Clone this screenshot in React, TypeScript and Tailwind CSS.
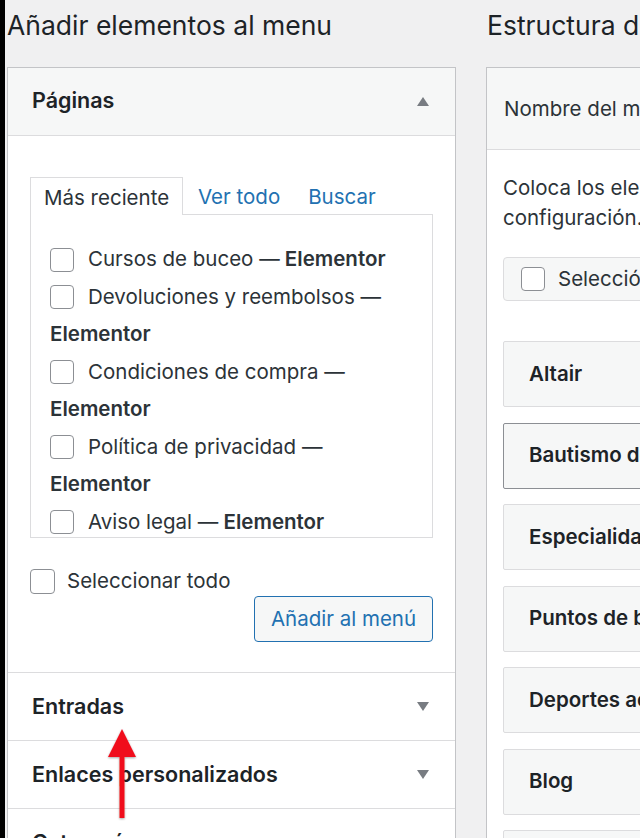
import React from "react";

const Box = () => (
  <span className="inline-block w-[24px] h-[24px] shrink-0 rounded-[4px] border border-[#8c8f94] bg-white" />
);

const TriUp = () => (
  <svg width="12" height="9" viewBox="0 0 12 9" className="shrink-0">
    <path d="M6 0 L12 9 L0 9 Z" fill="#787c82" />
  </svg>
);
const TriDown = () => (
  <svg width="12" height="9" viewBox="0 0 12 9" className="shrink-0">
    <path d="M0 0 L12 0 L6 9 Z" fill="#787c82" />
  </svg>
);

function Item({ text, bold, second }: { text: string; bold?: string; second?: string }) {
  return (
    <>
      <div className="flex items-center h-[37.5px]">
        <Box />
        <span className="ml-[14px] whitespace-nowrap">
          {text}
          {bold ? <b className="font-semibold"> {bold}</b> : null}
        </span>
      </div>
      {second ? (
        <div className="h-[37.5px] flex items-center font-semibold">{second}</div>
      ) : null}
    </>
  );
}

function ClosedSection({ title }: { title: string }) {
  return (
    <div className="h-[68px] border-t border-[#dcdcde] bg-white flex items-center justify-between pl-[24px] pr-[26px]">
      <span className="text-[21.5px] font-semibold text-[#1d2327] whitespace-nowrap -mt-[1px]">{title}</span>
      <TriDown />
    </div>
  );
}

export default function App() {
  const menuItems = [
    "Altair",
    "Bautismo de buceo",
    "Especialidades",
    "Puntos de buceo",
    "Deportes acuáticos",
    "Blog",
    "",
  ];
  return (
    <div
      className="relative w-[640px] h-[838px] overflow-hidden bg-[#f0f0f1] flex text-[#2c3338]"
      style={{ fontFamily: "Inter, 'Noto Sans', sans-serif" }}
    >
      <div className="w-[5px] shrink-0 bg-black" />
      <div className="flex shrink-0">
        {/* Left column */}
        <div className="w-[450px] shrink-0 pl-[2px]">
          <div className="h-[67px] pt-[8px]">
            <h2 className="text-[26.5px] leading-[34px] font-normal text-[#1d2327] whitespace-nowrap">
              Añadir elementos al menu
            </h2>
          </div>
          <div className="w-[449px] border-x border-t border-[#c3c4c7] bg-white">
            <div className="h-[68px] bg-[#f6f7f7] flex items-center justify-between pl-[24px] pr-[26px] border-b border-[#dcdcde]">
              <span className="text-[21.5px] font-semibold text-[#1d2327] -mt-[2px]">Páginas</span>
              <TriUp />
            </div>
            <div className="px-[22px] pt-[41px] pb-[30px] text-[20.5px]">
              <div className="flex items-end h-[37px]">
                <div className="w-[153px] h-[38px] -mb-px relative z-10 pl-[13px] pt-[3px] border-x border-t border-[#dcdcde] bg-white flex items-center whitespace-nowrap">
                  Más reciente
                </div>
                <div className="h-[37px] pt-[3px] flex items-center pl-[15px] text-[#2271b1] whitespace-nowrap">Ver todo</div>
                <div className="h-[37px] pt-[3px] flex items-center pl-[28px] text-[#2271b1]">Buscar</div>
              </div>
              <div className="h-[324px] border border-[#dcdcde] overflow-hidden pl-[19px] pt-[26px]">
                <Item text="Cursos de buceo —" bold="Elementor" />
                <Item text="Devoluciones y reembolsos —" second="Elementor" />
                <Item text="Condiciones de compra —" second="Elementor" />
                <Item text="Política de privacidad —" second="Elementor" />
                <Item text="Aviso legal —" bold="Elementor" />
              </div>
              <div className="flex items-center h-[24px] mt-[31px]">
                <span className="inline-block w-[25px] h-[25px] rounded-[4px] border border-[#8c8f94] bg-white" />
                <span className="ml-[12px]">Seleccionar todo</span>
              </div>
              <div className="flex justify-end mt-[3px]">
                <div className="w-[179px] h-[46px] rounded-[4px] border border-[#2271b1] bg-[#f6f7f7] text-[#2271b1] flex items-center justify-center whitespace-nowrap">
                  Añadir al menú
                </div>
              </div>
            </div>
            <ClosedSection title="Entradas" />
            <ClosedSection title="Enlaces personalizados" />
            <ClosedSection title="Categorías" />
          </div>
        </div>

        {/* Right column */}
        <div className="w-[400px] shrink-0 pl-[31px]">
          <div className="h-[67px] pt-[8px] pl-[1px]">
            <h2 className="text-[26.5px] leading-[34px] font-normal text-[#1d2327] whitespace-nowrap">
              Estructura del menú
            </h2>
          </div>
          <div className="border-l border-t border-[#c3c4c7] bg-white">
            <div className="h-[82px] bg-[#f6f7f7] border-b border-[#dcdcde] flex items-center pl-[17px] pt-[2px] text-[20.5px] whitespace-nowrap">
              Nombre del menú
            </div>
            <div className="pl-[16px] pt-[23px] text-[20.5px]">
              <div className="leading-[30px] whitespace-nowrap">Coloca los elementos en el orden que prefieras.</div>
              <div className="leading-[30px] whitespace-nowrap">configuración.</div>
              <div className="mt-[24px] h-[44px] bg-[#f6f7f7] border border-[#dcdcde] rounded-[4px] flex items-center pl-[17px] whitespace-nowrap">
                <Box />
                <span className="ml-[13px]">Selección múltiple</span>
              </div>
              <div className="mt-[40px] flex flex-col gap-[15.5px]">
                {menuItems.map((m, i) => (
                  <div
                    key={i}
                    className={
                      "h-[66px] rounded-[2px] bg-[#f6f7f7] border flex items-center pl-[25px] font-semibold text-[#1d2327] whitespace-nowrap " +
                      (i === 1 ? "border-[#8c8f94]" : "border-[#dcdcde]")
                    }
                  >
                    {m}
                  </div>
                ))}
              </div>
            </div>
          </div>
        </div>
      </div>

      {/* Red annotation arrow */}
      <svg
        className="absolute left-[100px] top-[722px]"
        width="44"
        height="104"
        viewBox="0 0 44 104"
      >
        <defs>
          <filter id="sh" x="-50%" y="-50%" width="200%" height="200%">
            <feDropShadow dx="0" dy="1" stdDeviation="1.2" floodColor="#000" floodOpacity="0.35" />
          </filter>
        </defs>
        <g filter="url(#sh)">
          <path d="M22 7 L36 35 L24.5 35 L24.5 96 L19.5 96 L19.5 35 L8 35 Z" fill="#f0101a" />
        </g>
      </svg>
    </div>
  );
}
